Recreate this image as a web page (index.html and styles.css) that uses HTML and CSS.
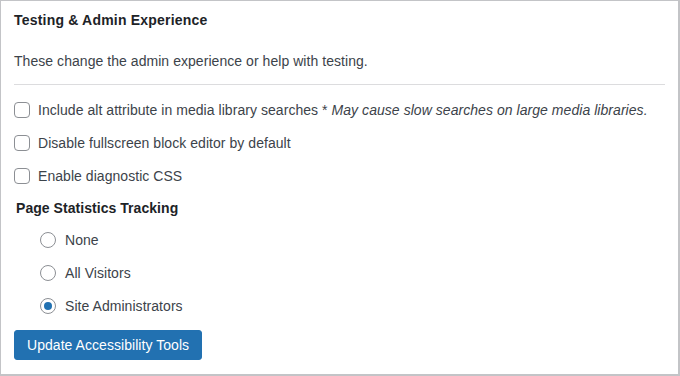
FILE: index.html
```html
<!DOCTYPE html>
<html lang="en">
<head>
<meta charset="utf-8">
<title>Testing &amp; Admin Experience</title>
<link rel="stylesheet" href="styles.css">
</head>
<body>
<form class="panel">
  <h2 class="title">Testing &amp; Admin Experience</h2>
  <p class="desc">These change the admin experience or help with testing.</p>
  <hr class="divider">
  <div class="checks">
    <label class="row"><span class="box"></span><span>Include alt attribute in media library searches <span class="note">* <em>May cause slow searches on large media libraries.</em></span></span></label>
    <label class="row"><span class="box"></span><span>Disable fullscreen block editor by default</span></label>
    <label class="row"><span class="box"></span><span>Enable diagnostic CSS</span></label>
  </div>
  <h3 class="subtitle">Page Statistics Tracking</h3>
  <div class="radios">
    <label class="row"><span class="radio"></span><span>None</span></label>
    <label class="row"><span class="radio"></span><span>All Visitors</span></label>
    <label class="row"><span class="radio checked"></span><span>Site Administrators</span></label>
  </div>
  <button type="button" class="btn">Update Accessibility Tools</button>
</form>
</body>
</html>
```

FILE: styles.css
```css
* { box-sizing: border-box; }
html, body { margin: 0; padding: 0; background: #fff; }
body {
  font-family: "Liberation Sans", Arial, sans-serif;
  font-size: 14px;
  line-height: 20px;
  color: #3c434a;
  letter-spacing: 0.05px;
}
.panel {
  width: 680px;
  height: 376px;
  border-style: solid;
  border-color: #c3c4c7;
  border-width: 1px 2px 2px 1px;
  padding: 9px 13px 0 13px;
  display: flex;
  flex-direction: column;
  align-items: flex-start;
}
.title {
  margin: 0;
  font-size: 14px;
  line-height: 20px;
  font-weight: 700;
  color: #1d2327;
  letter-spacing: 0.2px;
}
.desc {
  margin: 21px 0 0;
}
.divider {
  align-self: stretch;
  margin: 13px 0 0;
  border: 0;
  border-top: 1px solid #dcdcde;
  height: 0;
}
.checks, .radios {
  display: flex;
  flex-direction: column;
  gap: 13px;
}
.checks { margin-top: 15px; }
.row {
  display: flex;
  align-items: center;
  gap: 8px;
  height: 20px;
  white-space: nowrap;
}
.box {
  width: 16px;
  height: 16px;
  border: 1px solid #8c8f94;
  border-radius: 4px;
  background: #fff;
  flex: none;
}
.note em { font-style: italic; }
.subtitle {
  margin: 12px 0 0 2px;
  font-size: 14px;
  line-height: 20px;
  font-weight: 700;
  color: #1d2327;
}
.radios {
  margin: 12px 0 0 26px;
}
.radios .row { gap: 9px; }
.radio {
  width: 16px;
  height: 16px;
  border: 1px solid #8c8f94;
  border-radius: 50%;
  background: #fff;
  flex: none;
  display: flex;
  align-items: center;
  justify-content: center;
}
.radio.checked::after {
  content: "";
  width: 8px;
  height: 8px;
  border-radius: 50%;
  background: #2271b1;
}
.btn {
  margin-top: 14px;
  height: 30px;
  padding: 0 12px;
  border: 1px solid #2271b1;
  border-radius: 3px;
  background: #2271b1;
  color: #fff;
  font-family: inherit;
  font-size: 14px;
  line-height: 28px;
  letter-spacing: 0.05px;
}
```
